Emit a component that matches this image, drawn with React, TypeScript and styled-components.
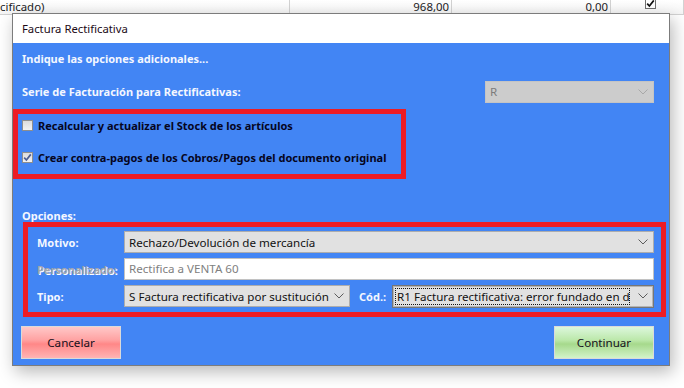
import { FC } from "react";
import styled, { createGlobalStyle } from "styled-components";

const GlobalStyle = createGlobalStyle`
  html, body {
    margin: 0;
    padding: 0;
    background: #ffffff;
  }
  body {
    font-family: "Noto Sans", "Open Sans", sans-serif;
    font-size: 11px;
    overflow: hidden;
  }
`;

const Screen = styled.div`
  position: relative;
  width: 684px;
  height: 388px;
  overflow: hidden;
  background: #ffffff;
`;

/* grid row of the window behind the dialog */
const GridRow = styled.div`
  display: flex;
  height: 14px;
  background: linear-gradient(#ffffff, #f5f5f5);
  border-bottom: 1px solid #d2d2d2;
  color: #1b1b24;
  font-size: 11.4px;
  line-height: 13px;
`;

const GridCell = styled.div<{ $w?: number; $right?: boolean }>`
  ${(p) => (p.$w ? `width: ${p.$w}px; flex: none;` : "flex: 1;")}
  box-sizing: border-box;
  border-right: 1px solid #d2d2d2;
  padding: ${(p) => (p.$right ? "0 2px 0 0" : "0")};
  white-space: nowrap;
  overflow: hidden;
  display: flex;
  justify-content: ${(p) => (p.$right ? "flex-end" : "flex-start")};
  align-items: flex-start;
`;

const GridCheck = styled.div`
  width: 11px;
  height: 12px;
  margin: -3px 0 0 34px;
  box-sizing: border-box;
  border: 1px solid #6f6f6f;
  background: #fff;
  display: grid;
  place-items: center;
`;

const Dialog = styled.div`
  position: absolute;
  left: 12px;
  top: 13px;
  width: 658px;
  height: 353px;
  box-sizing: border-box;
  border: 1px solid #7c7c7c;
  box-shadow: 3px 6px 16px rgba(0, 0, 0, 0.28);
  display: flex;
  flex-direction: column;
  background: #ffffff;
`;

const TitleBar = styled.div`
  height: 29px;
  flex: none;
  display: flex;
  align-items: center;
  padding-left: 9px;
  color: #1c0a16;
  font-size: 11.3px;
`;

const Body = styled.div`
  flex: 1;
  background: #4285f4;
  display: flex;
  flex-direction: column;
`;

const Heading = styled.div<{ $top: number; $h?: number }>`
  margin-top: ${(p) => p.$top}px;
  padding-left: 9px;
  height: ${(p) => p.$h ?? 16}px;
  line-height: 16px;
  font-weight: 700;
  color: #f4f7ff;
`;

const SerieRow = styled.div`
  margin-top: 13px;
  padding: 0 15px 0 9px;
  display: flex;
  align-items: center;
  justify-content: space-between;
  height: 23px;
`;

const Label = styled.span<{ $disabled?: boolean }>`
  font-weight: 700;
  color: ${(p) => (p.$disabled ? "#a3a6ad" : "#f4f7ff")};
  text-shadow: ${(p) => (p.$disabled ? "1px 1px 0 #ffffff" : "none")};
  white-space: nowrap;
`;

const Mark = styled.div<{ $w: number; $h: number; $left?: number }>`
  margin-left: ${(p) => p.$left ?? 0}px;
  width: ${(p) => p.$w}px;
  height: ${(p) => p.$h}px;
  box-sizing: border-box;
  border: 5px solid #ed1c24;
`;

const CheckBox1 = styled(Mark)`
  margin-top: 6px;
  padding: 1px 0 0 4px;
  display: flex;
  flex-direction: column;
  gap: 12px;
`;

const CheckRow = styled.div`
  display: flex;
  align-items: center;
  gap: 5px;
  height: 20px;
  font-weight: 700;
  color: #06061e;
  white-space: nowrap;
`;

const Box = styled.div`
  width: 11px;
  height: 11px;
  box-sizing: border-box;
  border: 1px solid #8e8e8e;
  background: linear-gradient(#dcdcdc, #f2f2f2);
  display: grid;
  place-items: center;
`;

const OptionsBox = styled(Mark)`
  padding: 4px 7px 4px 9px;
  display: grid;
  grid-template-columns: 87px minmax(0, 1fr);
  grid-auto-rows: 22px;
  row-gap: 5px;
  align-items: center;
`;

const Combo = styled.div<{ $disabled?: boolean; $focused?: boolean; $w?: number }>`
  ${(p) => (p.$w ? `width: ${p.$w}px; flex: none;` : "flex: 1; min-width: 0;")}
  height: ${(p) => (p.$focused ? 23 : 22)}px;
  box-sizing: border-box;
  display: flex;
  align-items: center;
  background: ${(p) => (p.$disabled ? "#cccccc" : "#e1e1e1")};
  border: 1px solid ${(p) => (p.$disabled ? "#c4c4c4" : p.$focused ? "#767676" : "#adadad")};
  box-shadow: ${(p) => (p.$focused ? "inset 0 0 0 1px #b4b4b4" : "none")};
  color: ${(p) => (p.$disabled ? "#7c7c7c" : "#111111")};
  font-size: 11.6px;
  padding: 0 5px 0 ${(p) => (p.$focused ? 2 : 4)}px;
`;

const ComboText = styled.div<{ $focused?: boolean }>`
  flex: 1;
  min-width: 0;
  overflow: hidden;
  white-space: nowrap;
  line-height: 17px;
  ${(p) =>
    p.$focused
      ? "outline: 1px dotted #111; outline-offset: -1px; padding-left: 2px; margin-right: 8px;"
      : ""}
`;

const TextInput = styled.div`
  height: 22px;
  box-sizing: border-box;
  background: #ffffff;
  border: 1px solid #c2c2c2;
  color: #808080;
  font-size: 11.6px;
  padding-left: 4px;
  line-height: 20px;
  white-space: nowrap;
`;

const InlineField = styled.div`
  display: flex;
  align-items: center;
  height: 23px;
  min-width: 0;
`;

const CodLabel = styled(Label)`
  margin: 0 6px 0 9px;
`;

const ButtonRow = styled.div`
  margin-top: 9px;
  padding: 0 15px 0 8px;
  display: flex;
  justify-content: space-between;
`;

const Button = styled.div<{ $tone: "red" | "green" }>`
  width: 100px;
  height: 33px;
  box-sizing: border-box;
  border: 1px solid #dadada;
  display: grid;
  place-items: center;
  color: #14101c;
  font-size: 11.6px;
  background: ${(p) =>
    p.$tone === "red"
      ? "linear-gradient(#ffc8c8 0%, #ffa2a2 42%, #ff8787 55%, #ffb4b4 100%)"
      : "linear-gradient(#dcf7dc 0%, #bce8aa 42%, #a6d98c 55%, #d2f3c9 100%)"};
`;

const Chevron: FC<{ color?: string }> = ({ color = "#5c5c5c" }) => (
  <svg width="10" height="6" viewBox="0 0 10 6">
    <polyline points="0.5,0.5 5,5 9.5,0.5" fill="none" stroke={color} strokeWidth="1" />
  </svg>
);

const Tick: FC<{ color: string }> = ({ color }) => (
  <svg width="9" height="9" viewBox="0 0 9 9">
    <polyline points="1.2,4.6 3.4,7 7.8,1.4" fill="none" stroke={color} strokeWidth="1.7" />
  </svg>
);

export default function App() {
  return (
    <Screen>
      <GlobalStyle />
      <GridRow>
        <GridCell $w={290}>cificado)</GridCell>
        <GridCell $w={162} $right>968,00</GridCell>
        <GridCell $w={159} $right>0,00</GridCell>
        <GridCell>
          <GridCheck>
            <Tick color="#111" />
          </GridCheck>
        </GridCell>
      </GridRow>

      <Dialog>
        <TitleBar>Factura Rectificativa</TitleBar>
        <Body>
          <Heading $top={8}>Indique las opciones adicionales...</Heading>
          <SerieRow>
            <Label>Serie de Facturación para Rectificativas:</Label>
            <Combo $disabled $w={169}>
              <ComboText>R</ComboText>
              <Chevron color="#a8a8a8" />
            </Combo>
          </SerieRow>

          <CheckBox1 $w={393} $h={70}>
            <CheckRow>
              <Box />
              Recalcular y actualizar el Stock de los artículos
            </CheckRow>
            <CheckRow>
              <Box>
                <Tick color="#4d5f94" />
              </Box>
              Crear contra-pagos de los Cobros/Pagos del documento original
            </CheckRow>
          </CheckBox1>

          <Heading $top={29} $h={14}>
            Opciones:
          </Heading>

          <OptionsBox $w={643} $h={95} $left={10}>
            <Label>Motivo:</Label>
            <Combo>
              <ComboText>Rechazo/Devolución de mercancía</ComboText>
              <Chevron />
            </Combo>
            <Label $disabled>Personalizado:</Label>
            <TextInput>Rectifica a VENTA 60</TextInput>
            <Label>Tipo:</Label>
            <InlineField>
              <Combo $w={226}>
                <ComboText>S Factura rectificativa por sustitución</ComboText>
                <Chevron />
              </Combo>
              <CodLabel>Cód.:</CodLabel>
              <Combo $focused>
                <ComboText $focused>
                  R1 Factura rectificativa: error fundado en derecho y causas del artículo 80
                </ComboText>
                <Chevron />
              </Combo>
            </InlineField>
          </OptionsBox>

          <ButtonRow>
            <Button $tone="red">Cancelar</Button>
            <Button $tone="green">Continuar</Button>
          </ButtonRow>
        </Body>
      </Dialog>
    </Screen>
  );
}
